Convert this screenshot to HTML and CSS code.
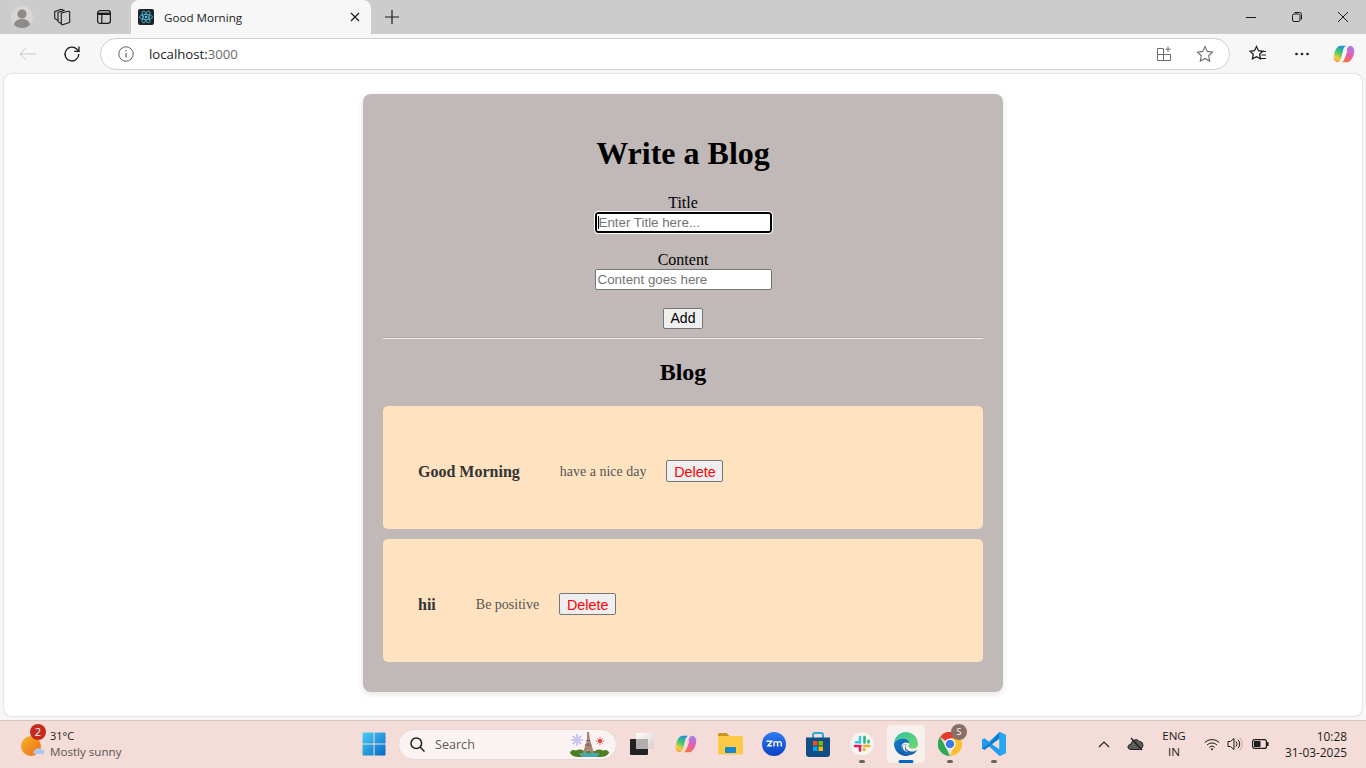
FILE: index.html
```html
<!DOCTYPE html>
<html lang="en">
<head>
<meta charset="utf-8">
<title>Good Morning</title>
<link rel="stylesheet" href="styles.css">
</head>
<body>
<header class="tabstrip">
  <span class="strip-btn avatar-slot">
    <svg width="24" height="24" viewBox="0 0 24 24"><circle cx="12" cy="12" r="11" fill="#d9d7d5"/><circle cx="12" cy="9" r="4.6" fill="#8e8b89"/><path d="M3.8 19.5c1.2-4 4.4-5.6 8.2-5.6s7 1.600 8.200 5.600A11 11 0 0 1 12 23a11 11 0 0 1-8.200-3.500z" fill="#8e8b89"/></svg>
  </span>
  <span class="strip-btn first-btn">
    <svg width="18" height="18" viewBox="0 0 18 18" fill="none" stroke="#1b1b1b" stroke-width="1.100"><path d="M8.300 5l7.200-1.800a1 1 0 0 1 1.200 1v9.600a1 1 0 0 1-.8 1L9.500 16.800a1 1 0 0 1-1.200-1z"/><path d="M8.300 15.500L5.500 14a1 1 0 0 1-.5-.9V4.300l6.500-1.900"/><path d="M5 12.500l-2.800-1.700a1 1 0 0 1-.5-.9V3.700l6.300-2.400 3.500 1.100"/></svg>
  </span>
  <span class="strip-btn">
    <svg width="16" height="16" viewBox="0 0 16 16" fill="none" stroke="#1b1b1b" stroke-width="1.200"><rect x="1.600" y="1.600" width="12.800" height="12.800" rx="2.400"/><path d="M1.600 4.800h12.800" stroke-width="2.400"/><path d="M5.800 4.800v9.600"/></svg>
  </span>
  <div class="tab">
    <span class="favicon">
      <svg width="16" height="16" viewBox="0 0 16 16" fill="none" stroke="#4fc3dc" stroke-width=".8"><ellipse cx="8" cy="8" rx="6.500" ry="2.600"/><ellipse cx="8" cy="8" rx="6.500" ry="2.600" transform="rotate(60 8 8)"/><ellipse cx="8" cy="8" rx="6.500" ry="2.600" transform="rotate(120 8 8)"/><circle cx="8" cy="8" r="1.300" fill="#4fc3dc" stroke="none"/></svg>
    </span>
    <span class="tab-title">Good Morning</span>
    <svg class="tab-close" width="10" height="10" viewBox="0 0 10 10" stroke="#1b1b1b" stroke-width="1.200"><path d="M1 1l8 8M9 1l-8 8"/></svg>
  </div>
  <svg class="new-tab" width="14" height="14" viewBox="0 0 14 14" stroke="#1b1b1b" stroke-width="1.200"><path d="M7 0v14M0 7h14"/></svg>
  <div class="win-controls">
    <svg width="10" height="10" viewBox="0 0 10 10" stroke="#1b1b1b"><path d="M0 5.500h10"/></svg>
    <svg width="10" height="10" viewBox="0 0 10 10" fill="none" stroke="#1b1b1b"><rect x=".5" y="2" width="7.500" height="7.500" rx="1.500"/><path d="M2.500.5h5a2 2 0 0 1 2 2v5"/></svg>
    <svg width="10" height="10" viewBox="0 0 10 10" stroke="#1b1b1b"><path d="M0 0l10 10M10 0L0 10"/></svg>
  </div>
</header>

<nav class="toolbar">
  <svg class="back" width="18" height="14" viewBox="0 0 18 14" fill="none" stroke="#c9c9c9"><path d="M17 7H1M7 1L1 7l6 6"/></svg>
  <svg class="reload" width="18" height="18" viewBox="0 0 18 18" fill="none" stroke="#1b1b1b" stroke-width="1.300"><path d="M15.800 9a6.900 6.900 0 1 1-1.900-4.700L16 6.400"/><path d="M16 1.600v4.800h-4.800"/></svg>
  <div class="address">
    <svg class="info" width="16" height="16" viewBox="0 0 16 16" fill="none" stroke="#5f5f5f"><circle cx="8" cy="8" r="7.200"/><path d="M8 7v4.600" stroke-width="1.200"/><path d="M8 4.200v1.300" stroke-width="1.200"/></svg>
    <span class="url"><span class="url-host">localhost:</span>3000</span>
    <svg class="addr-icon" width="16" height="16" viewBox="0 0 16 16" fill="none" stroke="#6e6e6e"><path d="M7.500 2.500H1.500v12h13V8.500M1.500 8.500h13M7.500 2.500v12"/><path d="M12 .5v5.500M9.300 3.200h5.400"/></svg>
    <svg class="addr-icon star" width="18" height="18" viewBox="0 0 18 18" fill="none" stroke="#6e6e6e" stroke-width="1.100"><path d="M9 1.500l2.300 4.900 5.200.7-3.800 3.700 1 5.300L9 13.500l-4.700 2.600 1-5.300-3.800-3.700 5.200-.7z"/></svg>
  </div>
  <svg class="fav" width="18" height="18" viewBox="0 0 18 18" fill="none" stroke="#1b1b1b" stroke-width="1.200"><path d="M7.500 1.500l2 4.200 4.300.5-3.200 3 .9 4.600-4-2.200-4.100 2.200.9-4.600-3.200-3 4.400-.5z"/><path d="M11.500 6.500H17M12.500 10H17M12 13.500h5"/></svg>
  <svg class="more" width="14" height="4" viewBox="0 0 14 4" fill="#1b1b1b"><circle cx="1.500" cy="2" r="1.300"/><circle cx="7" cy="2" r="1.300"/><circle cx="12.500" cy="2" r="1.300"/></svg>
  <svg class="copilot" width="24" height="22" viewBox="0 0 24 24">
    <defs>
      <linearGradient id="cpa" x1=".7" y1="0" x2=".3" y2="1"><stop offset="0" stop-color="#1c8fe6"/><stop offset=".45" stop-color="#3fca6a"/><stop offset=".8" stop-color="#f4cf3e"/><stop offset="1" stop-color="#f59a3a"/></linearGradient>
      <linearGradient id="cpb" x1=".7" y1="0" x2=".3" y2="1"><stop offset="0" stop-color="#9c86ee"/><stop offset=".5" stop-color="#e65cb4"/><stop offset="1" stop-color="#f6733c"/></linearGradient>
    </defs>
    <path d="M8 3h6.500c-1.800.8-2.800 2.300-3.400 4.500l-2.300 9.300C8.200 19.300 6.800 21 4.500 21 1.500 20 .5 17.500.8 15 1.300 9.500 4 3 8 3z" fill="url(#cpa)"/>
    <path d="M15.500 21H9.300c1.900-.8 2.800-2.300 3.400-4.500l2.300-9.300C15.600 4.700 17 3 19.400 3c3 1 4 3.500 3.800 6-.5 5.500-3.700 12-7.700 12z" fill="url(#cpb)"/>
    <path d="M13.600 8.500h2.200l-2.900 8h-2.500z" fill="#f7f7f7"/>
  </svg>
</nav>

<div class="viewport">
  <main class="page">
    <section class="app">
      <h1 class="app-title">Write a Blog</h1>
      <form class="form">
        <label class="field">
          <span>Title</span>
          <span class="input-wrap has-caret">
            <input class="text-input is-focus" type="text" placeholder="Enter Title here...">
          </span>
        </label>
        <label class="field">
          <span>Content</span>
          <span class="input-wrap">
            <input class="text-input" type="text" placeholder="Content goes here">
          </span>
        </label>
        <button class="add-btn" type="button">Add</button>
      </form>
      <hr class="rule">
      <h2 class="blog-title">Blog</h2>
      <article class="post">
        <h3 class="post-title">Good Morning</h3>
        <p class="post-body">have a nice day</p>
        <button class="del-btn" type="button">Delete</button>
      </article>
      <article class="post">
        <h3 class="post-title">hii</h3>
        <p class="post-body">Be positive</p>
        <button class="del-btn" type="button">Delete</button>
      </article>
    </section>
  </main>
</div>

<footer class="taskbar">
  <div class="weather">
    <span class="weather-icon">
      <svg width="26" height="26" viewBox="0 0 26 26">
        <defs><linearGradient id="sun" x1="0" y1="0" x2="1" y2="1"><stop offset="0" stop-color="#f7b52e"/><stop offset="1" stop-color="#ee6a12"/></linearGradient></defs>
        <circle cx="11" cy="15" r="10" fill="url(#sun)"/>
        <path d="M15 23c-2 0-2.500-3-.3-3.300.5-2.500 4-3.500 5.800-1.500 2-.3 4 .8 3.900 2.500 0 1.500-1 2.300-2.500 2.300z" fill="#a9c8f2"/>
      </svg>
      <span class="badge">2</span>
    </span>
    <span class="weather-text"><span class="temp">31°C</span><span class="cond">Mostly sunny</span></span>
  </div>
  <span class="slot">
    <svg width="24" height="24" viewBox="0 0 24 24">
      <defs><linearGradient id="win" x1="0" y1="0" x2="1" y2="1"><stop offset="0" stop-color="#4fcdf5"/><stop offset="1" stop-color="#0069c4"/></linearGradient></defs>
      <path d="M.5 1.500a1 1 0 0 1 1-1h10v11H.5zM12.500.5h10a1 1 0 0 1 1 1v10h-11zM.5 12.500h11v11h-10a1 1 0 0 1-1-1zM12.500 12.500h11v10a1 1 0 0 1-1 1h-10z" fill="url(#win)"/>
    </svg>
  </span>
  <div class="search">
    <svg width="15" height="15" viewBox="0 0 15 15" fill="none" stroke="#1c1c1c" stroke-width="1.500"><circle cx="6.300" cy="6.300" r="5.300"/><path d="M10 10l4.500 4.500"/></svg>
    <span class="search-text">Search</span>
    <svg class="search-art" width="41" height="28" viewBox="0 0 41 28">
      <g stroke="#a3a3f0" stroke-width="1.100"><path d="M2 10h12M8 4v12M3.800 5.800l8.400 8.400M12.200 5.800l-8.400 8.400"/></g>
      <circle cx="8" cy="10" r="2.500" fill="#c3c3f6"/>
      <g stroke="#ee8a86" stroke-width="1"><path d="M26.500 11h9M31 6.500v9M27.800 7.800l6.400 6.400M34.200 7.800l-6.400 6.400"/></g>
      <circle cx="31" cy="11" r="2" fill="#e0444a"/>
      <path d="M1 22c2-2.500 4-2.500 6-1.500 3-1.500 6-1 8 .5h11c2-1.500 5-2 8-.5 2-1 4-1 6 1.500 0 2-3 5-8 5H9c-5 0-8-3-8-5z" fill="#4f7f22"/>
      <path d="M10 23h21l-3 4H13z" fill="#46a8a8"/>
      <path d="M18 2h2l1 8 4 13h-3c-.7-3.500-4.300-3.500-5 0h-3l4-13z" fill="#a88579"/>
      <path d="M15.800 15h6.400M17.200 10.500h3.600" stroke="#7d5f57"/>
    </svg>
  </div>
  <span class="slot">
    <svg width="24" height="24" viewBox="0 0 24 24">
      <defs><linearGradient id="tv" x1="0" y1="0" x2="1" y2="1"><stop offset="0" stop-color="#fff"/><stop offset="1" stop-color="#d5cfcd"/></linearGradient></defs>
      <rect x="0" y="7" width="18" height="16" rx="1" fill="#222"/>
      <rect x="6" y="1" width="18" height="16" rx="1" fill="url(#tv)"/>
      <rect x="6" y="7" width="12" height="10" fill="#b3aeac"/>
    </svg>
  </span>
  <span class="slot">
    <svg width="24" height="22" viewBox="0 0 24 24">
      <path d="M8 3h6.500c-1.800.8-2.800 2.300-3.400 4.500l-2.300 9.300C8.200 19.300 6.800 21 4.500 21 1.500 20 .5 17.500.8 15 1.300 9.500 4 3 8 3z" fill="url(#cpa)"/>
      <path d="M15.500 21H9.300c1.900-.8 2.800-2.300 3.400-4.500l2.300-9.300C15.600 4.700 17 3 19.400 3c3 1 4 3.500 3.800 6-.5 5.500-3.700 12-7.700 12z" fill="url(#cpb)"/>
      <path d="M13.600 8.500h2.200l-2.900 8h-2.500z" fill="#f4dcd9"/>
    </svg>
  </span>
  <span class="slot">
    <svg width="25" height="22" viewBox="0 0 25 22">
      <path d="M0 1.500A1.500 1.500 0 0 1 1.500 0h7l3 3H0z" fill="#c8961c"/>
      <path d="M0 3h23.500a1.500 1.500 0 0 1 1.500 1.500V20a1.500 1.500 0 0 1-1.500 1.500h-22A1.500 1.500 0 0 1 0 20z" fill="#fbcb46"/>
      <rect x="7" y="14" width="11" height="6" rx="1" fill="#1a86d0"/>
    </svg>
  </span>
  <span class="slot">
    <svg width="24" height="24" viewBox="0 0 24 24">
      <defs><linearGradient id="zm" x1="0" y1="0" x2="0" y2="1"><stop offset="0" stop-color="#2f7cf6"/><stop offset="1" stop-color="#0a3fc4"/></linearGradient></defs>
      <circle cx="12" cy="12" r="12" fill="url(#zm)"/>
      <path d="M3.500 9.300h5.200l-3.700 4.500h3.800M11 14.500V9.500M11 11c.3-1.800 3.400-1.800 3.600 0v3.500M14.600 11c.3-1.800 3.500-1.800 3.700 0v3.500" transform="translate(1)" fill="none" stroke="#fff" stroke-width="1.400"/>
    </svg>
  </span>
  <span class="slot">
    <svg width="24" height="25" viewBox="0 0 24 25">
      <path d="M7 6V3a2 2 0 0 1 2-2h6a2 2 0 0 1 2 2v3" fill="none" stroke="#27a9e0" stroke-width="2"/>
      <path d="M0 5.500h24V22a3 3 0 0 1-3 3H3a3 3 0 0 1-3-3z" fill="#0f4f86"/>
      <rect x="7" y="9" width="4.500" height="4.500" fill="#f25022"/><rect x="12.500" y="9" width="4.500" height="4.500" fill="#7fba00"/><rect x="7" y="14.500" width="4.500" height="4.500" fill="#00a4ef"/><rect x="12.500" y="14.500" width="4.500" height="4.500" fill="#ffb900"/>
    </svg>
  </span>
  <span class="slot has-dot">
    <svg width="24" height="24" viewBox="0 0 24 24" fill="none" stroke-width="2.600" stroke-linecap="round">
      <circle cx="12" cy="12" r="11.800" fill="#f8f4f1" stroke="#ddd" stroke-width=".4"/>
      <path d="M10 5v5.500" stroke="#36c5f0"/><path d="M6 10.200h2" stroke="#36c5f0"/>
      <path d="M18.500 8.800v1.500M14.500 5v5.500" stroke="#2eb67d"/>
      <path d="M14.200 14h5" stroke="#ecb22e"/><path d="M14.200 18v-1" stroke="#ecb22e"/>
      <path d="M5 14h5.500M10 18.500V14" stroke="#e01e5a"/>
    </svg>
    <i class="dot"></i>
  </span>
  <span class="slot active">
    <svg width="24" height="24" viewBox="0 0 24 24">
      <defs>
        <linearGradient id="edg" x1="0" y1="0" x2="1" y2="1"><stop offset="0" stop-color="#35c1a0"/><stop offset="1" stop-color="#6cdc6d"/></linearGradient>
        <linearGradient id="edb" x1="0" y1="0" x2="1" y2="1"><stop offset="0" stop-color="#0f82cf"/><stop offset="1" stop-color="#0a4f9e"/></linearGradient>
      </defs>
      <path d="M0 12C0 5 5.500 0 12 0s12 5 12 12.500c0 2.600-2.300 4-5.200 4-2.400 0-4.300-.8-4.300-2.300 0-.7.700-1.200.7-2.700 0-2.700-2.700-5-6.200-5C4.800 6.500 0 9 0 12z" fill="url(#edg)"/>
      <path d="M0 12c0-3 4.800-5.500 9-5.500 3.500 0 6.200 2.300 6.200 5-3.500-2-8-.5-8 3.500 0 4 3.500 7.500 8 7.500.8 0 1.200.4.200.7-1 .3-2.200.8-3.400.8C5.500 24 0 18.500 0 12z" fill="url(#edb)"/>
      <path d="M7.200 15.500c0 4 3.500 7.500 8 7.500 3.500 0 6.500-2 8-5.300-1.500 1.300-3 1.800-5 1.800-4 0-6.500-2.300-6.500-4.500 0-1 .7-1.800 1-2.500-3-.7-5.500 1-5.500 3z" fill="#1565b5"/>
      <path d="M8.500 14c-.3 3 2.500 6 6 6.300-2.700-1-3.800-3-3.300-5.300.2-1 .7-1.700 1.200-2.400-2-.4-3.700 0-3.900 1.400z" fill="#f9efed"/>
    </svg>
    <i class="active-bar"></i>
  </span>
  <span class="slot has-dot">
    <svg width="24" height="24" viewBox="0 0 24 24">
      <path d="M12 12L2 5a12 12 0 0 1 20.800 1.500H12z" fill="#e33b2e"/>
      <path d="M12 24A12 12 0 0 1 2 5l6 10.500z" fill="#2da94f"/>
      <path d="M12 24a12 12 0 0 0 10.800-17.500H12l4 8z" fill="#fbc02d"/>
      <circle cx="12" cy="12" r="5.500" fill="#fff"/><circle cx="12" cy="12" r="4.300" fill="#3b7de8"/>
    </svg>
    <span class="chrome-badge">S</span>
    <i class="dot"></i>
  </span>
  <span class="slot has-dot">
    <svg width="24" height="24" viewBox="0 0 24 24">
      <path d="M17.500 0L24 3v18l-6.500 3L7 14.200 2.500 17.700 0 16.500v-9l2.500-1.200L7 9.800z" fill="#1f9cf0"/>
      <path d="M17.500 6.500L9.800 12l7.700 5.500z" fill="#f4dcd9"/>
      <path d="M17.500 0v6.500L7 14.200 2.500 17.700 0 16.500l7-4.500z" fill="#0b78c9" opacity=".9"/>
      <path d="M17.500 0L24 3v18l-6.500 3z" fill="#2aa7f3"/>
    </svg>
    <i class="dot"></i>
  </span>
  <div class="tray">
    <svg class="tray-chevron" width="12" height="7" viewBox="0 0 12 7" fill="none" stroke="#1c1c1c" stroke-width="1.100"><path d="M1 6l5-5 5 5"/></svg>
    <svg class="tray-cloud" width="18" height="14" viewBox="0 0 18 14"><path d="M4 12.500c-4 0-4-5 0-5.300C4.500 3 10 1 12.300 4.500c3.500-.5 5 5 2 7-.5.800-1 1-2 1z" fill="#5f5b5a" stroke="#1c1c1c"/><path d="M4 1l11 12" stroke="#1c1c1c" stroke-width="1.300"/></svg>
    <span class="lang"><span>ENG</span><span>IN</span></span>
    <svg class="tray-wifi" width="16" height="13" viewBox="0 0 16 13" fill="none" stroke="#1c1c1c"><path d="M.7 4.500a10.500 10.500 0 0 1 14.600 0M3 7a7.200 7.200 0 0 1 10 0M5.300 9.300a3.900 3.900 0 0 1 5.400 0"/><circle cx="8" cy="11.300" r="1" fill="#1c1c1c" stroke="none"/></svg>
    <svg class="tray-vol" width="16" height="14" viewBox="0 0 16 14" fill="none" stroke="#1c1c1c"><path d="M1 4.500h2.500L7 1.500v11l-3.500-3H1z"/><path d="M9 4.500a3.500 3.500 0 0 1 0 5M11 2.800a6 6 0 0 1 0 8.400"/><path d="M13 1a9 9 0 0 1 0 12" stroke="#b9aaa8"/></svg>
    <svg class="tray-batt" width="17" height="10" viewBox="0 0 17 10"><rect x=".6" y=".6" width="13.800" height="8.800" rx="2" fill="none" stroke="#1c1c1c" stroke-width="1.200"/><rect x="2" y="2" width="6.500" height="6" fill="#1c1c1c"/><rect x="15" y="3" width="1.600" height="4" rx=".6" fill="#1c1c1c"/></svg>
    <span class="clock"><span>10:28</span><span>31-03-2025</span></span>
  </div>
</footer>
</body>
</html>
```
FILE: styles.css
```css
* { box-sizing: border-box; }
html, body { height: 100%; }
body {
  margin: 0;
  width: 1366px;
  height: 768px;
  overflow: hidden;
  display: flex;
  flex-direction: column;
  background: #f7f7f7;
  font-family: "Open Sans", "Noto Sans", sans-serif;
  color: #1b1b1b;
}
svg { display: block; flex: none; }

/* Browser chrome */
.tabstrip {
  height: 34px;
  background: #cccccc;
  display: flex;
  align-items: center;
  padding-left: 4px;
  flex: none;
}
.strip-btn {
  width: 42px;
  height: 34px;
  display: flex;
  align-items: center;
  justify-content: center;
}
.avatar-slot { width: 36px; }
.first-btn { margin-left: 1px; }
.tab {
  margin-left: 6px;
  width: 240px;
  height: 34px;
  align-self: flex-end;
  background: #f7f7f7;
  border-radius: 8px 8px 0 0;
  display: flex;
  align-items: center;
  padding-left: 7px;
}
.favicon {
  width: 16px;
  height: 16px;
  background: #20232a;
  border-radius: 2px;
  flex: none;
}
.tab-title {
  margin-left: 10px;
  font-size: 11.6px;
  flex: 1;
  white-space: nowrap;
}
.tab-close { margin-right: 11px; }
.new-tab { margin-left: 14px; }
.win-controls {
  margin-left: auto;
  display: flex;
  align-items: center;
  gap: 36px;
  padding-right: 18px;
}
.toolbar {
  height: 40px;
  flex: none;
  display: flex;
  align-items: center;
  background: #f7f7f7;
  padding-left: 19px;
}
.reload { margin-left: 26px; }
.address {
  margin-left: 19px;
  width: 1130px;
  height: 32px;
  background: #fff;
  border: 1px solid #cfcfcf;
  border-radius: 16px;
  display: flex;
  align-items: center;
  padding-left: 17px;
}
.url {
  margin-left: 15px;
  font-size: 13.2px;
  color: #6b6b6b;
  flex: 1;
}
.url-host { color: #1b1b1b; }
.addr-icon { margin-right: 24px; }
.addr-icon.star { margin-right: 15px; }
.fav { margin-left: 19px; }
.more { margin-left: 28px; }
.copilot { margin-left: 23px; }
.viewport {
  flex: 1;
  min-height: 0;
  padding: 0 4px 4px;
  background: #f7f7f7;
}
.page {
  height: 100%;
  background: #fff;
  border-radius: 8px;
  box-shadow: 0 0 2px rgba(0, 0, 0, .25);
  padding-top: 20px;
  display: flex;
  flex-direction: column;
  align-items: center;
}

/* Page content */
.app {
  width: 640px;
  height: 598px;
  background: #c1b8b8;
  border-radius: 8px;
  box-shadow: 0 2px 6px rgba(0, 0, 0, .12);
  padding: 20px;
  font-family: "Liberation Serif", serif;
  color: #000;
  text-align: center;
}
.app-title {
  margin: 21px 0 22px;
  font-size: 32px;
  line-height: 37px;
  font-weight: 700;
}
.form {
  display: flex;
  flex-direction: column;
  align-items: center;
}
.field {
  display: flex;
  flex-direction: column;
  align-items: center;
  margin-bottom: 18px;
  font-size: 16px;
  line-height: 18px;
}
.input-wrap {
  position: relative;
  display: block;
  height: 21px;
}
.has-caret::after {
  content: "";
  position: absolute;
  left: 3px;
  top: 4px;
  width: 1px;
  height: 13px;
  background: #000;
}
.text-input {
  display: block;
  width: 177px;
  height: 21px;
  padding: 0 2px;
  border: 1px solid #767676;
  border-radius: 2px;
  background: #fff;
  font-family: "Liberation Sans", sans-serif;
  font-size: 13.33px;
}
.text-input::placeholder { color: #757575; }
.text-input.is-focus {
  border: 2px solid #000;
  outline: 1px solid #fff;
  padding: 0 1px 0 2px;
  border-radius: 3px;
}
.add-btn {
  width: 40px;
  height: 21px;
  padding: 0 0 1px;
  border: 1px solid #767676;
  border-radius: 2px;
  background: #efefef;
  color: #000;
  font-family: "Liberation Sans", sans-serif;
  font-size: 14px;
}
.rule {
  margin: 8px 0 0;
  height: 2px;
  border: 0;
  border-top: 1px solid #a9a9a9;
  border-bottom: 1px solid #eeeeee;
}
.blog-title {
  margin: 20px 0 20px;
  font-size: 24px;
  line-height: 27px;
  font-weight: 700;
}
.post {
  height: 123px;
  margin-bottom: 10px;
  background: #ffe3c1;
  border-radius: 5px;
  display: flex;
  align-items: center;
  padding: 54px 0 47px 35px;
  text-align: left;
}
.post-title {
  margin: 0 40px 0 0;
  padding-top: 2px;
  font-size: 16px;
  font-weight: 700;
  color: #333;
}
.post-body {
  margin: 0 20px 0 0;
  padding-top: 2px;
  font-size: 14px;
  color: #555;
}
.del-btn {
  width: 57px;
  height: 22px;
  padding: 1px 0 0;
  border: 1px solid #767676;
  border-radius: 2px;
  background: #efefef;
  color: #ff0000;
  font-family: "Liberation Sans", sans-serif;
  font-size: 14.4px;
}

/* Taskbar */
.taskbar {
  height: 48px;
  flex: none;
  background: #f4dcd9;
  border-top: 1px solid #d9c6c3;
  padding-bottom: 1px;
  display: flex;
  align-items: center;
}
.weather {
  width: 352px;
  display: flex;
  align-items: center;
  padding-left: 20px;
}
.weather-icon {
  position: relative;
  width: 26px;
  height: 26px;
  flex: none;
}
.badge {
  position: absolute;
  left: 10px;
  top: -7px;
  width: 16px;
  height: 16px;
  border-radius: 50%;
  background: #c42b1c;
  color: #fff;
  font-size: 11px;
  line-height: 16px;
  text-align: center;
}
.weather-text {
  display: flex;
  flex-direction: column;
  margin-left: 4px;
  font-size: 11px;
  line-height: 16px;
}
.cond { color: #5a5353; font-size: 11.6px; }
.slot {
  position: relative;
  width: 44px;
  height: 38px;
  flex: none;
  display: flex;
  align-items: center;
  justify-content: center;
}
.search {
  width: 219px;
  height: 31px;
  margin: 0 3px 0 2px;
  border-radius: 16px;
  background: #fbf3f1;
  border: 1px solid #e7d8d5;
  display: flex;
  align-items: center;
  padding-left: 11px;
  flex: none;
}
.search-text {
  margin-left: 10px;
  font-size: 12.6px;
  color: #5f5a5a;
  flex: 1;
}
.search-art { margin-right: 6px; }
.slot.active {
  width: 38px;
  margin: 0 3px;
  background: #f9efed;
  border-radius: 4px;
}
.dot, .active-bar {
  position: absolute;
  left: 50%;
  transform: translateX(-50%);
  border-radius: 2px;
}
.dot {
  bottom: 0;
  width: 6px;
  height: 3px;
  background: #6b6463;
}
.active-bar {
  bottom: 0;
  width: 15px;
  height: 3px;
  background: #0067c0;
}
.chrome-badge {
  position: absolute;
  left: 23px;
  top: -1px;
  width: 16px;
  height: 16px;
  border-radius: 50%;
  background: #8a6f66;
  color: #fff;
  font-size: 9px;
  line-height: 16px;
  text-align: center;
}
.tray {
  flex: 1;
  display: flex;
  align-items: center;
  padding-left: 82px;
  padding-right: 19px;
}
.tray-cloud { margin-left: 17px; }
.lang {
  margin-left: 9px;
  width: 40px;
  display: flex;
  flex-direction: column;
  align-items: center;
  font-size: 11.6px;
  line-height: 16px;
}
.tray-wifi { margin-left: 10px; }
.tray-vol { margin-left: 7px; }
.tray-batt { margin-left: 9px; }
.clock {
  margin-left: auto;
  display: flex;
  flex-direction: column;
  align-items: flex-end;
  font-size: 11.9px;
  line-height: 16px;
}
```
